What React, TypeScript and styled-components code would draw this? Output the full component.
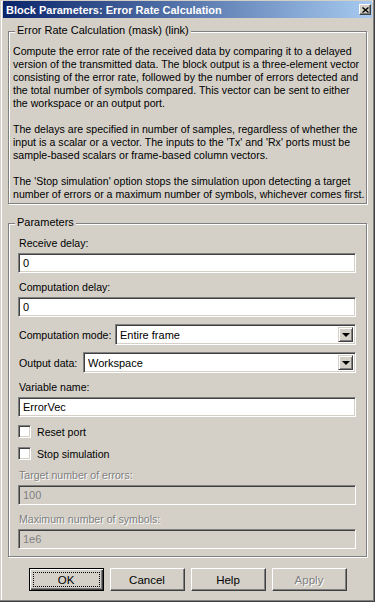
import React from "react";
import styled, { createGlobalStyle, css } from "styled-components";

const GlobalStyle = createGlobalStyle`
  html, body {
    margin: 0;
    padding: 0;
    background: #d4d0c8;
  }
  body {
    font-family: "Liberation Sans", Arial, sans-serif;
    font-size: 11px;
    color: #000;
  }
`;

const Window = styled.div`
  box-sizing: border-box;
  width: 375px;
  height: 602px;
  display: flex;
  flex-direction: column;
  padding: 1px 3px 3px 3px;
  background: #d4d0c8;
  box-shadow: inset -1px -1px #404040, inset -2px -2px #808080,
    inset 1px 1px #d4d0c8, inset 2px 2px #fff;
`;

const TitleBar = styled.div`
  height: 17px;
  display: flex;
  align-items: center;
  justify-content: space-between;
  padding: 0 1px 0 3px;
  background: linear-gradient(to right, #0a246a, #a6caf0);
`;

const TitleText = styled.span`
  color: #fff;
  font-weight: bold;
  font-size: 11px;
  white-space: nowrap;
`;

const CloseButton = styled.div`
  box-sizing: border-box;
  width: 12px;
  height: 11px;
  display: flex;
  align-items: center;
  justify-content: center;
  background: #d4d0c8;
  border: 1px solid;
  border-color: #fff #404040 #404040 #fff;
  box-shadow: inset -1px -1px #808080;
`;

const Body = styled.div`
  flex: 1;
  display: flex;
  flex-direction: column;
  padding: 0 5px;
`;

const Group = styled.div<{ $top: number; $pad: string }>`
  position: relative;
  margin-top: ${(p) => p.$top}px;
  padding: ${(p) => p.$pad};
  border: 1px solid #808080;
  box-shadow: inset 1px 1px #fff, 1px 1px #fff;
`;

const Legend = styled.span`
  position: absolute;
  top: -8px;
  left: 6px;
  padding: 0 2px;
  line-height: 13px;
  background: #d4d0c8;
  white-space: nowrap;
`;

const Description = styled.div`
  line-height: 13px;
  white-space: nowrap;
  font-size: 10.6px;

  & > p {
    margin: 0 0 13px;
  }
  & > p:last-child {
    margin-bottom: 0;
  }
`;

const Fields = styled.div`
  display: flex;
  flex-direction: column;
  gap: 7px;
`;

const Field = styled.div`
  display: flex;
  flex-direction: column;
  gap: 3px;
`;

const Label = styled.span<{ $disabled?: boolean; $width?: number }>`
  line-height: 14px;
  padding-left: 1px;
  font-size: 10.6px;
  white-space: nowrap;
  ${(p) =>
    p.$width &&
    css`
      width: ${p.$width}px;
      flex: none;
    `}
  ${(p) =>
    p.$disabled &&
    css`
      color: #808080;
      text-shadow: 1px 1px #fff;
    `}
`;

const sunken = css`
  box-sizing: border-box;
  border: 1px solid;
  border-color: #808080 #fff #fff #808080;
  box-shadow: inset 1px 1px #404040, inset -1px -1px #d4d0c8;
`;

const TextBox = styled.div<{ $disabled?: boolean }>`
  ${sunken};
  height: 20px;
  display: flex;
  align-items: center;
  padding-left: 4px;
  background: ${(p) => (p.$disabled ? "#d4d0c8" : "#fff")};
  color: ${(p) => (p.$disabled ? "#808080" : "#000")};
`;

const Row = styled.div`
  display: flex;
  align-items: center;
  height: 21px;
`;

const Select = styled.div`
  ${sunken};
  flex: 1;
  height: 21px;
  display: flex;
  align-items: stretch;
  padding: 2px;
  background: #fff;
`;

const SelectValue = styled.span`
  flex: 1;
  display: flex;
  align-items: center;
  padding-left: 2px;
`;

const ArrowButton = styled.span`
  box-sizing: border-box;
  width: 15px;
  display: flex;
  align-items: center;
  justify-content: center;
  background: #d4d0c8;
  border: 1px solid;
  border-color: #d4d0c8 #404040 #404040 #d4d0c8;
  box-shadow: inset 1px 1px #fff, inset -1px -1px #808080;
`;

const Arrow = styled.span`
  width: 0;
  height: 0;
  border-left: 4px solid transparent;
  border-right: 4px solid transparent;
  border-top: 4px solid #000;
  margin-top: 1px;
`;

const CheckRow = styled.div`
  display: flex;
  align-items: center;
  gap: 5px;
  height: 15px;
`;

const CheckBox = styled.span`
  ${sunken};
  width: 13px;
  height: 13px;
  background: #fff;
`;

const ButtonBar = styled.div`
  display: flex;
  justify-content: center;
  gap: 6px;
  margin-top: 11px;
`;

const Button = styled.div<{ $default?: boolean; $disabled?: boolean }>`
  box-sizing: border-box;
  width: 75px;
  height: 23px;
  display: flex;
  padding: 1px;
  background: #d4d0c8;
  border: 1px solid;
  border-color: #fff #404040 #404040 #fff;
  box-shadow: inset -1px -1px #808080;
  ${(p) =>
    p.$default &&
    css`
      border-color: #000;
      box-shadow: inset 1px 1px #fff, inset -1px -1px #404040,
        inset -2px -2px #808080;
    `}
  ${(p) =>
    p.$disabled &&
    css`
      color: #808080;
      text-shadow: 1px 1px #fff;
    `}
`;

const ButtonFace = styled.span<{ $focused?: boolean }>`
  flex: 1;
  display: flex;
  align-items: center;
  justify-content: center;
  margin: 2px;
  border: 1px dotted ${(p) => (p.$focused ? "#000" : "transparent")};
  font-size: 11.5px;
`;

function CloseGlyph() {
  return (
    <svg width="7" height="6" viewBox="0 0 7 6">
      <path d="M0.5 0.5 L6.5 5.5 M6.5 0.5 L0.5 5.5" stroke="#000" strokeWidth="1.4" />
    </svg>
  );
}

export default function App() {
  return (
    <>
      <GlobalStyle />
      <Window>
        <TitleBar>
          <TitleText>Block Parameters: Error Rate Calculation</TitleText>
          <CloseButton>
            <CloseGlyph />
          </CloseButton>
        </TitleBar>
        <Body>
          <Group $top={13} $pad="13px 4px 2px 4px">
            <Legend>Error Rate Calculation (mask) (link)</Legend>
            <Description>
              <p>
                Compute the error rate of the received data by comparing it to a delayed
                <br />
                version of the transmitted data. The block output is a three-element vector
                <br />
                consisting of the error rate, followed by the number of errors detected and
                <br />
                the total number of symbols compared. This vector can be sent to either
                <br />
                the workspace or an output port.
              </p>
              <p>
                The delays are specified in number of samples, regardless of whether the
                <br />
                input is a scalar or a vector. The inputs to the 'Tx' and 'Rx' ports must be
                <br />
                sample-based scalars or frame-based column vectors.
              </p>
              <p>
                The 'Stop simulation' option stops the simulation upon detecting a target
                <br />
                number of errors or a maximum number of symbols, whichever comes first.
              </p>
            </Description>
          </Group>

          <Group $top={19} $pad="12px 10px 7px 9px">
            <Legend>Parameters</Legend>
            <Fields>
              <Field>
                <Label>Receive delay:</Label>
                <TextBox>0</TextBox>
              </Field>
              <Field>
                <Label>Computation delay:</Label>
                <TextBox>0</TextBox>
              </Field>
              <Row>
                <Label $width={96}>Computation mode:</Label>
                <Select>
                  <SelectValue>Entire frame</SelectValue>
                  <ArrowButton>
                    <Arrow />
                  </ArrowButton>
                </Select>
              </Row>
              <Row>
                <Label $width={64}>Output data:</Label>
                <Select>
                  <SelectValue>Workspace</SelectValue>
                  <ArrowButton>
                    <Arrow />
                  </ArrowButton>
                </Select>
              </Row>
              <Field>
                <Label>Variable name:</Label>
                <TextBox>ErrorVec</TextBox>
              </Field>
              <CheckRow>
                <CheckBox />
                <Label>Reset port</Label>
              </CheckRow>
              <CheckRow>
                <CheckBox />
                <Label>Stop simulation</Label>
              </CheckRow>
              <Field>
                <Label $disabled>Target number of errors:</Label>
                <TextBox $disabled>100</TextBox>
              </Field>
              <Field>
                <Label $disabled>Maximum number of symbols:</Label>
                <TextBox $disabled>1e6</TextBox>
              </Field>
            </Fields>
          </Group>

          <ButtonBar>
            <Button $default>
              <ButtonFace $focused>OK</ButtonFace>
            </Button>
            <Button>
              <ButtonFace>Cancel</ButtonFace>
            </Button>
            <Button>
              <ButtonFace>Help</ButtonFace>
            </Button>
            <Button $disabled>
              <ButtonFace>Apply</ButtonFace>
            </Button>
          </ButtonBar>
        </Body>
      </Window>
    </>
  );
}
